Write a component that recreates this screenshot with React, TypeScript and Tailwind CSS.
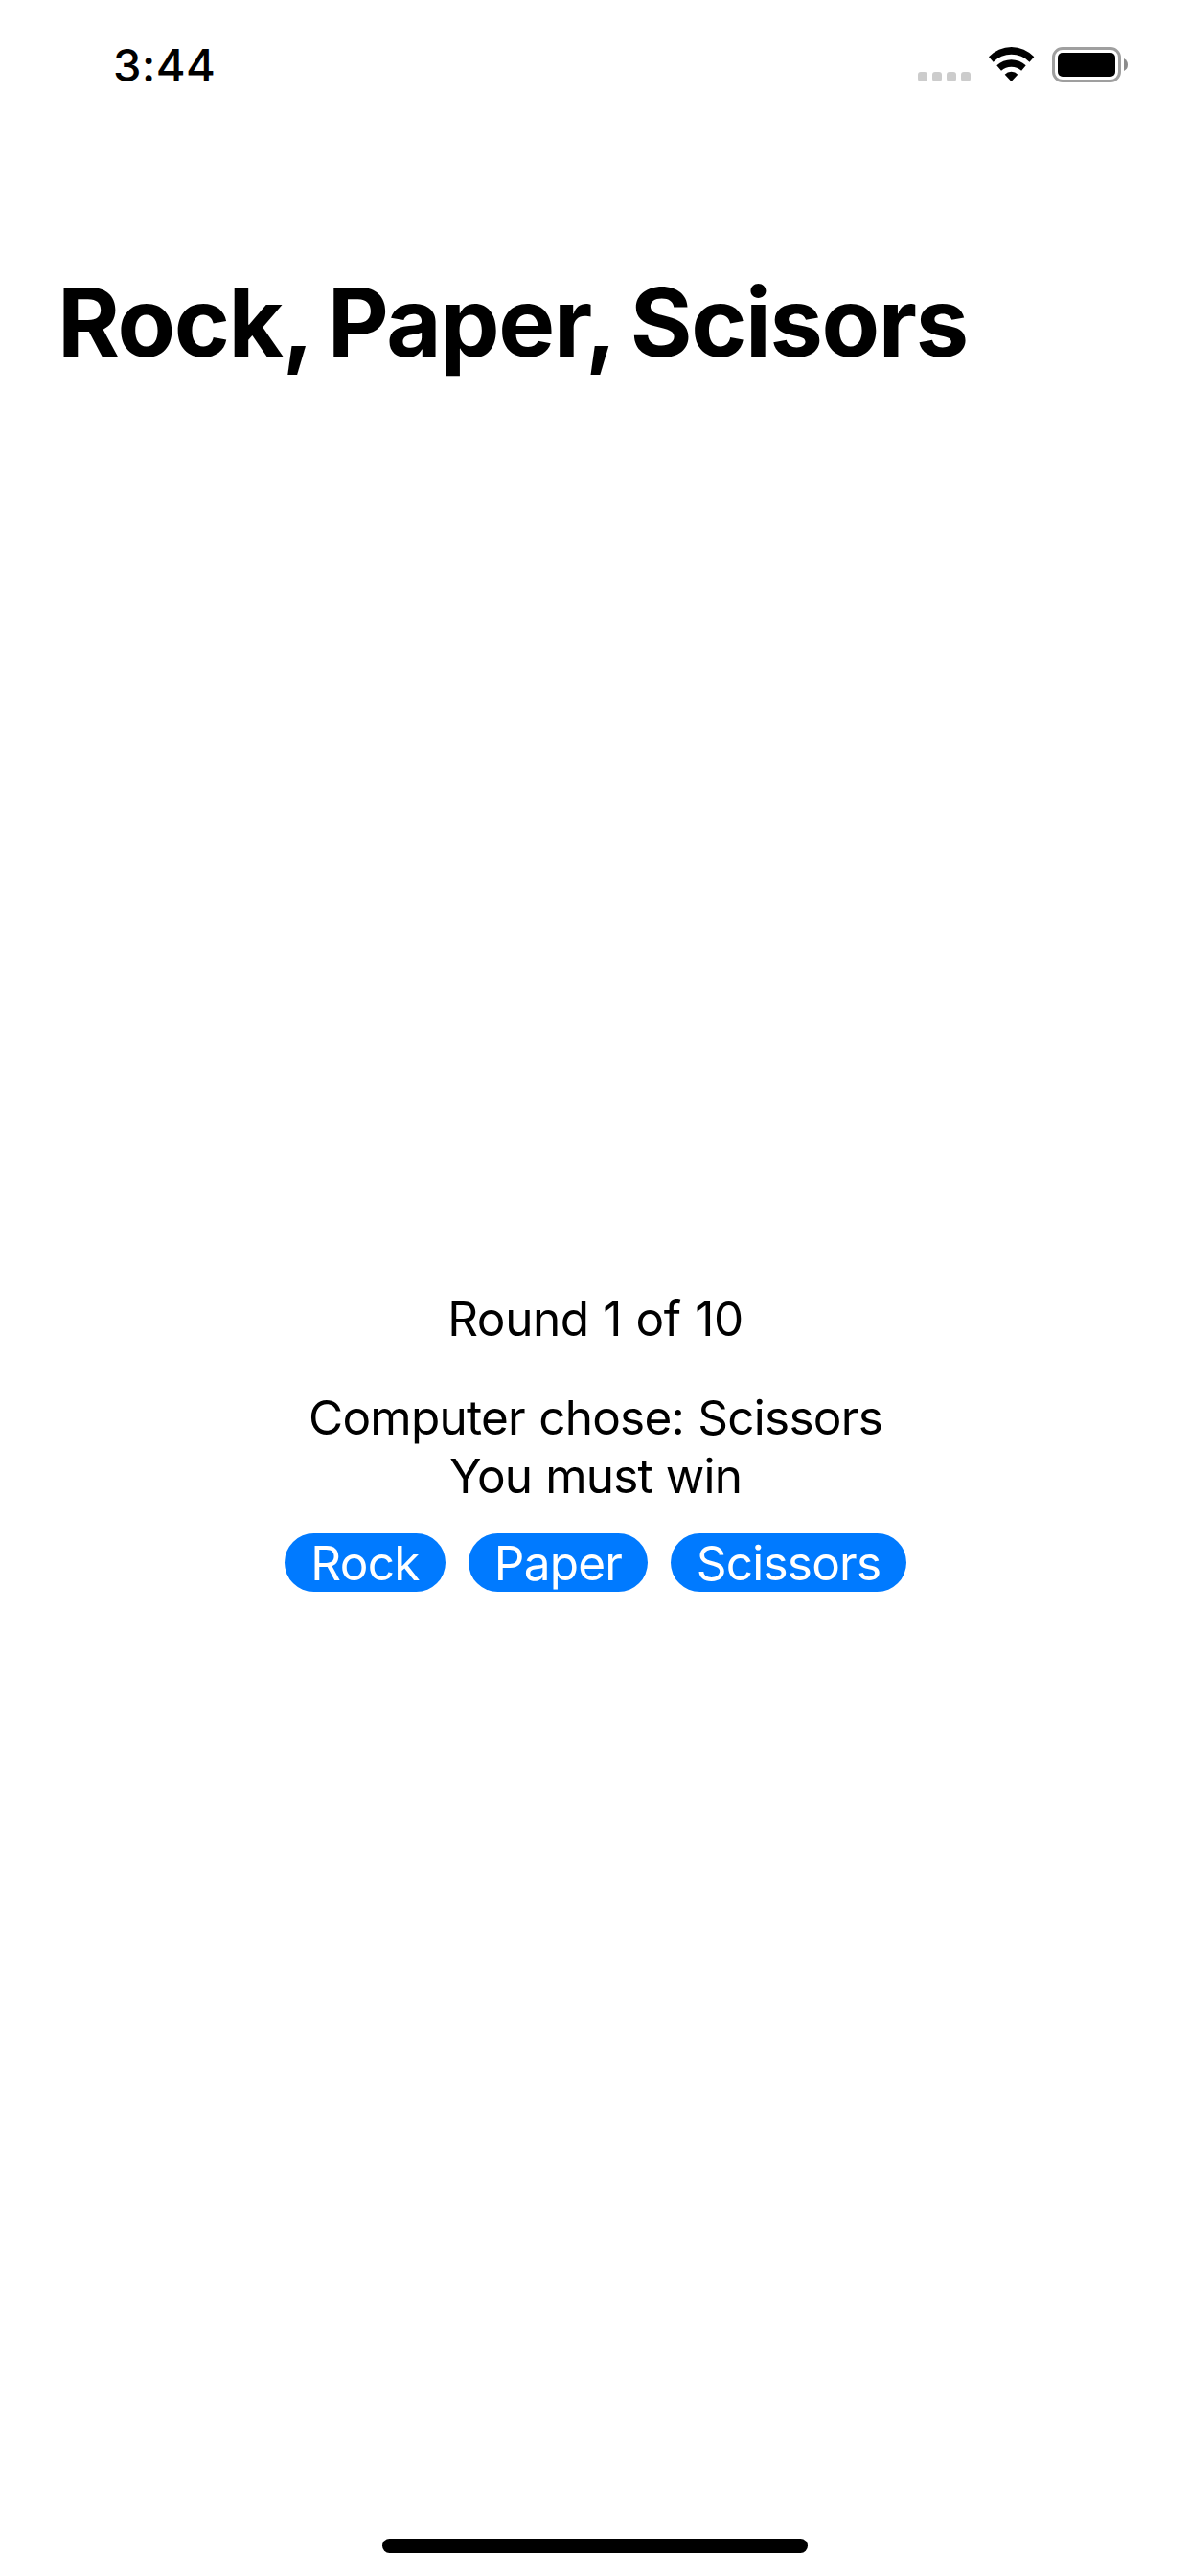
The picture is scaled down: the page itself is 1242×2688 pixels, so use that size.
function Pill({ label, className }: { label: string; className: string }) {
  return (
    <button className={`flex h-[61px] items-center justify-center rounded-full bg-[#007aff] pt-[2px] text-white ${className}`}>
      {label}
    </button>
  );
}

function WifiIcon() {
  return (
    <svg className="mt-1 ml-[18px]" width="50" height="38" viewBox="0 0 50 38">
      <path d="M1 11.300A32.300 32.300 0 0 1 48.300 11.300L43.500 16.700A26.600 26.600 0 0 0 5.700 16.700Z" />
      <path d="M9.300 20.200A22.200 22.200 0 0 1 39.700 20.200L35.100 25.700A16.200 16.200 0 0 0 14 25.700Z" />
      <path d="M17.700 29.700A9.200 9.200 0 0 1 31.300 29.700L24.500 37Z" />
    </svg>
  );
}

function BatteryIcon() {
  return (
    <svg className="mt-[5px] ml-[17px]" width="80" height="37" viewBox="0 0 80 37">
      <rect x="1.500" y="1.500" width="69" height="34" rx="9.500" fill="none" stroke="#9f9f9f" strokeWidth="3" />
      <rect x="6" y="6" width="60" height="25" rx="5" />
      <path d="M75 12Q79 14 79 18.500T75 25Z" fill="#8c8c8c" />
    </svg>
  );
}

export default function App() {
  return (
    <main className="flex h-[2688px] w-[1242px] flex-col bg-white font-['Inter',sans-serif] text-black">
      <header className="flex h-[132px] items-start justify-between pt-11 pr-16 pl-[118px]">
        <time className="text-[47px] leading-[48px] font-medium tracking-[0.5px]">3:44</time>
        <div className="flex items-start">
          <div className="mt-[31px] flex gap-[5px]">
            {[0, 1, 2, 3].map((i) => (
              <span key={i} className="size-[10px] rounded-[3px] bg-[#cccccc]" />
            ))}
          </div>
          <WifiIcon />
          <BatteryIcon />
        </div>
      </header>
      <h1 className="mt-[143px] ml-[60px] text-[99px] leading-[122px] font-bold tracking-[-1.4px] whitespace-nowrap [word-spacing:-3.5px]">
        Rock, Paper, Scisors
      </h1>
      <section className="mt-[949px] flex flex-col items-center pl-px text-[49.5px] leading-[61px] tracking-[-0.75px] [word-spacing:1px]">
        <p className="tracking-[-0.4px]">Round 1 of 10</p>
        <p className="mt-[42px]">Computer chose: Scissors</p>
        <p className="tracking-[-0.85px]">You must win</p>
        <div className="mt-[29px] flex gap-6">
          <Pill label="Rock" className="w-[168px]" />
          <Pill label="Paper" className="w-[187px]" />
          <Pill label="Scissors" className="w-[246px]" />
        </div>
      </section>
      <div className="mt-auto mb-6 h-[15px] w-[444px] self-center rounded-full bg-black" />
    </main>
  );
}
